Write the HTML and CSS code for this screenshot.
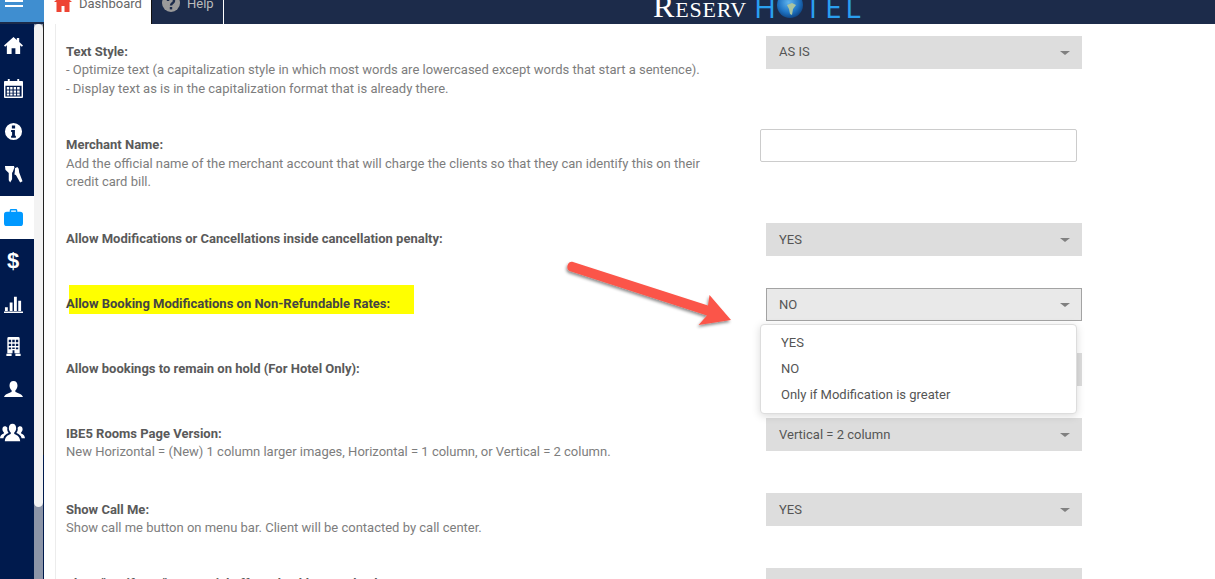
FILE: index.html
```html
<!DOCTYPE html>
<html lang="en">
<head>
    <meta charset="UTF-8">
    <title>ReservHotel Dashboard</title>
    <link rel="stylesheet" href="styles.css">
</head>
<body>

    <!-- Top bar -->
    <header class="topbar">
        <div class="menu-btn"><span></span><span></span></div>
        <div class="tab tab-active">
            <svg class="tab-icon" viewBox="0 0 18 18"><path fill="#ee4433" d="M9 0L0 8h2.500v10h5v-6h3v6h5V8H18z"/></svg>
            <span>Dashboard</span>
        </div>
        <div class="tab tab-help">
            <svg class="tab-icon" viewBox="0 0 18 18"><circle cx="9" cy="9" r="9" fill="#9a9a9a"/><path fill="none" stroke="#1c2b4a" stroke-width="2.400" d="M6 7c0-4 6-4 6 0 0 2-3 2-3 4.500"/><rect x="7.800" y="13" width="2.400" height="2.400" fill="#1c2b4a"/></svg>
            <span>Help</span>
        </div>
        <div class="logo">
            <span class="logo-reserv">Reserv</span>
            <span class="logo-hotel">H</span>
            <svg class="logo-globe" viewBox="0 0 26 26">
                <defs>
                    <radialGradient id="globe" cx="45%" cy="40%" r="65%">
                        <stop offset="0" stop-color="#5fb4ee"/>
                        <stop offset="0.6" stop-color="#1f74c4"/>
                        <stop offset="1" stop-color="#0c3f7c"/>
                    </radialGradient>
                </defs>
                <circle cx="13" cy="13" r="13" fill="url(#globe)"/>
                <path fill="#a9c4a0" d="M10 13l5-2 4 2-3 4-1 6-2-1-1-5z"/>
            </svg>
            <span class="logo-hotel">TEL</span>
        </div>
    </header>

    <div class="layout">
        <!-- Side navigation -->
        <nav class="sidebar">
            <div class="side-icons">
                <a class="side-item"><svg viewBox="0 0 20 20"><path d="M10 1L0 10l1.200 1.300L3 9.700V19h5v-6h4v6h5V9.700l1.800 1.600L20 10l-4-3.600V2h-2.500v2.200z"/></svg></a>
                <a class="side-item"><svg viewBox="0 0 20 20"><path fill-rule="evenodd" d="M4 0h2v2h8V0h2v2h3a1 1 0 0 1 1 1v16a1 1 0 0 1-1 1H1a1 1 0 0 1-1-1V3a1 1 0 0 1 1-1h3zM1.500 7v11.500h17V7zM3 8.500h2.500V11H3zm3.500 0H9V11H6.500zm3.700 0h2.500V11h-2.500zm3.600 0h2.700V11h-2.700zM3 12h2.500v2.500H3zm3.500 0H9v2.500H6.500zm3.700 0h2.500v2.500h-2.500zm3.600 0h2.700v2.500h-2.700zM3 15.300h2.500v2H3zm3.500 0H9v2H6.500zm3.700 0h2.500v2h-2.500zm3.600 0h2.700v2h-2.700z"/></svg></a>
                <a class="side-item"><svg viewBox="0 0 20 20"><path fill-rule="evenodd" d="M10 1a9 9 0 1 1 0 18 9 9 0 0 1 0-18zM8.300 3.800v3h3.400v-3zM7.500 8.500v2h1v4h-1v2h5v-2h-1v-6z"/></svg></a>
                <a class="side-item"><svg viewBox="0 0 20 20"><path d="M1 1h9.500L11 2.500 9 8H8.500v7l-2 3.500L5 16V8.500L1.500 5zM11.500 3.500L14 2l1.500 2 .5 4 3.500 9-2.500 1.500-4.500-8-1.500-.5.500-4z"/></svg></a>
                <a class="side-item side-active"><svg viewBox="0 0 20 18"><path fill-rule="evenodd" d="M6 3V1.500A1.500 1.500 0 0 1 7.500 0h5A1.500 1.500 0 0 1 14 1.500V3h3a3 3 0 0 1 3 3v9a3 3 0 0 1-3 3H3a3 3 0 0 1-3-3V6a3 3 0 0 1 3-3zM7.500 1.500V3h5V1.500z"/></svg></a>
                <a class="side-item"><span class="dollar">$</span></a>
                <a class="side-item"><svg viewBox="0 0 20 20"><path d="M1 14h3v4H1zM6 9h3v9H6zM10.500 3h3v15h-3zM15 7h3v11h-3zM0 18.500h20V20H0z"/></svg></a>
                <a class="side-item"><svg viewBox="0 0 20 20"><path fill-rule="evenodd" d="M5 0h10a1.500 1.500 0 0 1 1.500 1.500V17H11v-3H9v3H3.500V1.500A1.500 1.500 0 0 1 5 0zM5 3v2.500h2.500V3zm3.700 0v2.500h2.600V3zm3.800 0v2.500H15V3zM5 7v2.500h2.500V7zm3.700 0v2.500h2.600V7zm3.800 0v2.500H15V7zM5 11v2h2.500v-2zm7.500 0v2H15v-2zm-3.800 0v1.500h2.600V11zM2.500 17.500H8V20H2.500zm9.500 0h5.500V20H12z"/></svg></a>
                <a class="side-item"><svg viewBox="0 0 20 20"><path d="M10 1c2.800 0 4.200 2.200 4.200 4.800 0 2.200-1 4-2.200 5v1.700c2 1 7 1.800 8 5.500H0c1-3.700 6-4.500 8-5.500v-1.700c-1.200-1-2.200-2.800-2.200-5C5.800 3.200 7.200 1 10 1z"/></svg></a>
                <a class="side-item side-group"><svg viewBox="0 0 26 18"><path d="M13 0c2.500 0 3.800 2 3.800 4.500 0 2-.9 3.600-2 4.500v1.500c2 1 5.700 1.700 6.200 7.500H5c.5-5.800 4.200-6.500 6.200-7.500V9c-1.100-.9-2-2.500-2-4.500C9.200 2 10.500 0 13 0z"/><path d="M5 2.500c1.200 0 2.200.6 2.700 1.600-.5 2 0 4 1.300 5.400-2.500 1-5 2.400-5.500 5.500H0c.4-3.800 2.800-4.300 4-5V8.800C3.200 8 2.500 7 2.500 5.500 2.500 3.800 3.500 2.500 5 2.500zM21 2.500c-1.200 0-2.200.6-2.700 1.600.5 2 0 4-1.300 5.400 2.500 1 5 2.400 5.500 5.500H26c-.4-3.800-2.800-4.300-4-5V8.800c.8-.8 1.500-1.800 1.500-3.300 0-1.700-1-3-2.500-3z"/></svg></a>
            </div>
            <div class="side-scroll"><div class="side-thumb"></div></div>
        </nav>

        <!-- Settings list -->
        <main class="content">
            <div class="settings">

                <div class="row">
                    <div class="row-text">
                        <strong>Text Style:</strong>
                        <p>- Optimize text (a capitalization style in which most words are lowercased except words that start a sentence).</p>
                        <p>- Display text as is in the capitalization format that is already there.</p>
                    </div>
                    <div class="select select-first">AS IS<i class="caret"></i></div>
                </div>

                <div class="row">
                    <div class="row-text">
                        <strong>Merchant Name:</strong>
                        <p>Add the official name of the merchant account that will charge the clients so that they can identify this on their credit card bill.</p>
                    </div>
                    <input class="text-input" type="text">
                </div>

                <div class="row">
                    <div class="row-text">
                        <strong>Allow Modifications or Cancellations inside cancellation penalty:</strong>
                    </div>
                    <div class="select">YES<i class="caret"></i></div>
                </div>

                <div class="row">
                    <div class="row-text">
                        <mark class="highlight"></mark>
                        <strong class="over-mark">Allow Booking Modifications on Non-Refundable Rates:</strong>
                    </div>
                    <div class="select-wrap">
                        <div class="select select-open">NO<i class="caret"></i></div>
                        <ul class="dropdown">
                            <li>YES</li>
                            <li>NO</li>
                            <li>Only if Modification is greater</li>
                        </ul>
                    </div>
                </div>

                <div class="row">
                    <div class="row-text">
                        <strong>Allow bookings to remain on hold (For Hotel Only):</strong>
                    </div>
                    <div class="select"><i class="caret"></i></div>
                </div>

                <div class="row">
                    <div class="row-text">
                        <strong>IBE5 Rooms Page Version:</strong>
                        <p>New Horizontal = (New) 1 column larger images, Horizontal = 1 column, or Vertical = 2 column.</p>
                    </div>
                    <div class="select">Vertical = 2 column<i class="caret"></i></div>
                </div>

                <div class="row row-call">
                    <div class="row-text">
                        <strong>Show Call Me:</strong>
                        <p>Show call me button on menu bar. Client will be contacted by call center.</p>
                    </div>
                    <div class="select">YES<i class="caret"></i></div>
                </div>

                <div class="row">
                    <div class="row-text">
                        <strong>Show "Notify Me" on special offers checkbox at Checkout:</strong>
                    </div>
                    <div class="select"><i class="caret"></i></div>
                </div>

            </div>

            <!-- Red arrow drawn on top of the screenshot -->
            <svg class="annotation" viewBox="0 0 180 75">
                <defs>
                    <filter id="arrowShadow" x="-10%" y="-20%" width="120%" height="150%">
                        <feDropShadow dx="-1" dy="2" stdDeviation="1.500" flood-color="#000" flood-opacity="0.45"/>
                    </filter>
                </defs>
                <path filter="url(#arrowShadow)" fill="#fb5549" d="M5.500 6.500C6.500 3 9 2.500 11 3L146 46.500 147.500 36 169 61 136.500 66 145 56.500 7.500 12C5.500 11 5 8.500 5.500 6.500z"/>
            </svg>
        </main>
    </div>

</body>
</html>
```

FILE: styles.css
```css
/* General Styles */
html, body {
    margin: 0;
    padding: 0;
    height: 100%;
    overflow: hidden;
}

body {
    font-family: 'Roboto', 'Liberation Sans', sans-serif;
    font-size: 13px;
    color: #7d7d7d;
    background-color: #fff;
}

/* Top bar */
.topbar {
    display: flex;
    align-items: flex-end;
    height: 24px;
    background-color: #1c2b4a;
    overflow: hidden;
}

.menu-btn {
    width: 44px;
    height: 22px;
    flex-shrink: 0;
    margin-bottom: 2px;
    background-color: #3f8ed0;
    display: flex;
    flex-direction: column;
    gap: 3px;
    padding-left: 5px;
    box-sizing: border-box;
}

.menu-btn span {
    display: block;
    width: 18px;
    height: 2px;
    background-color: #fff;
}

.tab {
    display: flex;
    align-items: center;
    gap: 7px;
    height: 42px;
    padding: 0 10px;
    color: #bbb;
    border-right: 1px solid #fff;
    box-sizing: border-box;
    flex-shrink: 0;
}

.tab-active {
    width: 108px;
    background-color: #fff;
    color: #666;
    border-right: 1px solid #111;
}

.tab-help {
    width: 72px;
    padding-left: 10px;
}

.tab-icon {
    width: 18px;
    height: 18px;
    flex-shrink: 0;
}

.logo {
    display: flex;
    align-items: flex-end;
    margin-left: 429px;
    margin-bottom: 2px;
    line-height: 1;
    flex-shrink: 0;
}

.logo-reserv {
    font-family: 'Liberation Serif', serif;
    font-variant: small-caps;
    font-size: 32px;
    color: #fff;
    letter-spacing: 0.8px;
    margin-right: 7px;
}

.logo-hotel {
    font-family: 'Open Sans', sans-serif;
    font-size: 30px;
    color: #2a9fef;
    letter-spacing: 3.6px;
}

.logo-globe {
    width: 26px;
    height: 26px;
    margin: 0 2px 4px -3px;
    flex-shrink: 0;
}

/* Layout */
.layout {
    display: flex;
    height: 555px;
}

/* Sidebar */
.sidebar {
    display: flex;
    width: 44px;
    flex-shrink: 0;
    background-color: #001a4d;
    position: relative;
}

.side-icons {
    width: 44px;
    flex-shrink: 0;
}

.side-item {
    display: flex;
    align-items: center;
    padding-left: 4px;
    height: 43px;
    box-sizing: border-box;
}

.side-item svg {
    width: 19px;
    height: 19px;
    fill: #fff;
}

.side-group {
    padding-left: 0;
}

.side-group svg {
    width: 25px;
}

.side-active {
    background-color: #fff;
}

.side-active svg {
    fill: #0099ff;
}

.dollar {
    font-family: 'Liberation Sans', sans-serif;
    font-weight: bold;
    font-size: 22px;
    color: #fff;
    padding-left: 3px;
}

.side-scroll {
    position: absolute;
    top: 0;
    left: 34px;
    width: 9px;
    height: 100%;
    background-color: #8c95a8;
}

.side-scroll::after {
    content: "";
    position: absolute;
    top: 0;
    left: 9px;
    width: 1px;
    height: 431px;
    background-color: #222;
}

.side-thumb {
    height: 483px;
    background-color: #f3f3f3;
    border-radius: 5px;
}

/* Content */
.content {
    flex: 1;
    padding-left: 11px;
    position: relative;
}

.settings {
    border-left: 1px solid #ececec;
    padding: 11.5px 0 0 10px;
    height: 100%;
    box-sizing: border-box;
}

.row {
    display: grid;
    grid-template-columns: 700px 316px;
    padding-bottom: 32px;
}

.row-text {
    padding-top: 7px;
    margin-bottom: -1px;
    line-height: 18.5px;
    position: relative;
}

.row-call .row-text {
    padding-top: 8px;
    margin-bottom: -2px;
}

.row-text strong {
    color: #5a5a5a;
    font-weight: 700;
    display: block;
}

.row-text p {
    margin: 0;
    max-width: 660px;
}

.highlight {
    position: absolute;
    left: 3px;
    top: -3px;
    width: 345px;
    height: 29px;
    background-color: #ffff00;
}

.row-text .over-mark {
    position: relative;
    color: #444;
}

/* Form controls */
.select {
    position: relative;
    height: 33px;
    line-height: 33px;
    padding-left: 13px;
    background-color: #ddd;
    color: #555;
    box-sizing: border-box;
}

.select-first {
    line-height: 31px;
}

.select-open {
    line-height: 31px;
    background-color: #e9e9e9;
    border: 1px solid #a3a3a3;
    padding-left: 12px;
}

.caret {
    position: absolute;
    right: 12px;
    top: 15px;
    width: 0;
    height: 0;
    border-left: 5px solid transparent;
    border-right: 5px solid transparent;
    border-top: 4px solid #808080;
}

.select-open .caret {
    right: 11px;
    top: 14px;
}

.text-input {
    width: 317px;
    height: 33px;
    margin-left: -6px;
    border: 1px solid #ccc;
    border-radius: 2px;
    box-sizing: border-box;
    background-color: #fff;
}

.select-wrap {
    position: relative;
}

.dropdown {
    position: absolute;
    left: -6px;
    top: 36px;
    width: 317px;
    height: 90px;
    margin: 0;
    padding: 5px 0;
    list-style: none;
    background-color: #fff;
    border: 1px solid #ddd;
    border-radius: 4px;
    box-shadow: 0 2px 8px rgba(0, 0, 0, 0.15);
    box-sizing: border-box;
    z-index: 5;
    color: #555;
}

.dropdown li {
    height: 26px;
    line-height: 26px;
    padding-left: 20px;
}

/* Arrow */
.annotation {
    position: absolute;
    left: 518px;
    top: 235px;
    width: 180px;
    height: 75px;
    z-index: 6;
}
```
